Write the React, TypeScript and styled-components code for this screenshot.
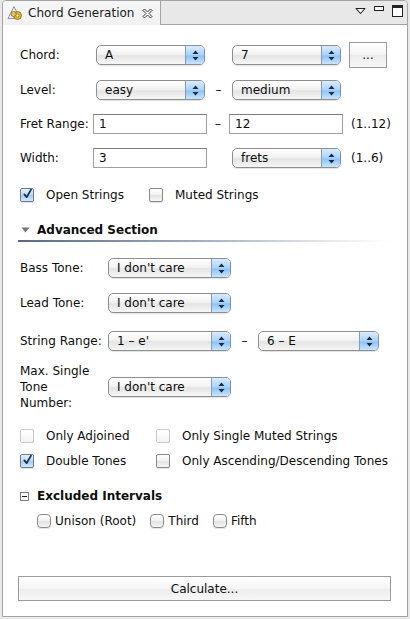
import React from 'react';
import styled, { createGlobalStyle } from 'styled-components';

const GlobalStyle = createGlobalStyle`
  html, body {
    margin: 0;
    padding: 0;
    background: #e9e9e9;
  }
  body {
    font-family: 'DejaVu Sans', 'Liberation Sans', sans-serif;
    font-size: 12px;
    color: #0d0d0d;
  }
`;

const View = styled.div`
  width: 406px;
  height: 617px;
  margin-left: 2px;
  box-sizing: border-box;
  border: 1px solid #a3a3a3;
  border-top-left-radius: 4px;
  border-top-right-radius: 4px;
  background: #fff;
  display: flex;
  flex-direction: column;
  overflow: hidden;
`;

const TabBar = styled.div`
  height: 23px;
  flex: none;
  display: flex;
  align-items: stretch;
  background: #e8e8e8;
  border-bottom: 1px solid #a3a3a3;
`;

const Tab = styled.div`
  flex: none;
  width: 158px;
  margin-bottom: -1px;
  box-sizing: border-box;
  display: flex;
  align-items: center;
  padding-left: 4px;
  background: linear-gradient(#f7f7f7, #f1f1f1);
  border-right: 1px solid #a3a3a3;
  border-top-left-radius: 4px;
  font-size: 12px;
  color: #1a1a1a;
  white-space: nowrap;
`;

const TabTitle = styled.span`
  margin: 0 8px 0 3px;
`;

const TabTools = styled.div`
  margin-left: auto;
  display: flex;
  align-items: flex-start;
  gap: 8px;
  padding: 4px 4px 0 0;
`;

const Content = styled.div`
  flex: 1;
  display: flex;
  flex-direction: column;
  padding-left: 17px;
`;

const Row = styled.div<{ $mt: number; $h?: number }>`
  display: flex;
  align-items: center;
  margin-top: ${(p) => p.$mt}px;
  height: ${(p) => p.$h ?? 20}px;
`;

const Label = styled.div<{ $w: number }>`
  width: ${(p) => p.$w}px;
  flex: none;
  line-height: 16px;
`;

const Dash = styled.div<{ $w: number }>`
  width: ${(p) => p.$w}px;
  flex: none;
  text-align: center;
`;

const Hint = styled.div<{ $ml: number }>`
  margin-left: ${(p) => p.$ml}px;
`;

const SelectBox = styled.div<{ $w: number }>`
  width: ${(p) => p.$w}px;
  height: 20px;
  flex: none;
  box-sizing: border-box;
  border: 1px solid #8e8e8e;
  border-radius: 5px;
  background: linear-gradient(#ffffff, #f3f3f3 45%, #e4e4e4 55%, #f6f6f6);
  box-shadow: 0 1px 1px rgba(0, 0, 0, 0.12);
  display: flex;
  align-items: center;
  overflow: hidden;
`;

const SelectText = styled.span`
  flex: 1;
  padding-left: 8px;
  white-space: nowrap;
`;

const SelectArrows = styled.span`
  width: 19px;
  align-self: stretch;
  box-sizing: border-box;
  border-left: 1px solid #7f9cc4;
  background: linear-gradient(#d9ecff, #a9d2fb 50%, #8cc2f7 55%, #c8e6ff);
  display: flex;
  align-items: center;
  justify-content: center;
`;

const TextInput = styled.div<{ $w: number }>`
  width: ${(p) => p.$w}px;
  height: 20px;
  flex: none;
  box-sizing: border-box;
  border: 1px solid #a0a0a0;
  border-top-color: #7c7c7c;
  background: #fff;
  padding-left: 5px;
  display: flex;
  align-items: center;
`;

const PushButton = styled.div<{ $w: number; $h: number; $ml?: number }>`
  width: ${(p) => p.$w}px;
  height: ${(p) => p.$h}px;
  margin-left: ${(p) => p.$ml ?? 0}px;
  flex: none;
  box-sizing: border-box;
  border: 1px solid #9a9a9a;
  background: linear-gradient(#ffffff, #f4f4f4 50%, #ececec 51%, #f7f7f7);
  display: flex;
  align-items: center;
  justify-content: center;
`;

const CheckItem = styled.div<{ $w?: number; $gap: number }>`
  width: ${(p) => (p.$w ? `${p.$w}px` : 'auto')};
  flex: none;
  display: flex;
  align-items: center;
  gap: ${(p) => p.$gap}px;
`;

const Box = styled.span<{ $checked?: boolean; $disabled?: boolean; $round?: number }>`
  width: 14px;
  height: 14px;
  box-sizing: border-box;
  border-radius: ${(p) => p.$round ?? 2}px;
  border: 1px solid ${(p) => (p.$disabled ? '#c8c8c8' : p.$checked ? '#6a7c96' : '#8a8a8a')};
  background: ${(p) =>
    p.$checked
      ? 'linear-gradient(#e4f1fd, #b9d9f6 50%, #a2cdf3 55%, #d4ebff)'
      : p.$disabled
      ? 'linear-gradient(#ffffff, #f4f4f4)'
      : 'linear-gradient(#ffffff, #f0f0f0 50%, #e3e3e3 55%, #f6f6f6)'};
  box-shadow: ${(p) => (p.$disabled ? 'none' : '0 1px 1px rgba(0,0,0,0.12)')};
  display: flex;
  align-items: center;
  justify-content: center;
  overflow: visible;
`;

const CheckText = styled.span`
  white-space: nowrap;
`;

const SectionHeader = styled.div<{ $mt: number; $gap: number }>`
  display: flex;
  align-items: center;
  gap: ${(p) => p.$gap}px;
  height: 18px;
  margin-top: ${(p) => p.$mt}px;
  font-weight: bold;
  font-size: 12px;
`;

const SectionRule = styled.div`
  height: 2px;
  margin: 1px 17px 0 -2px;
  background: linear-gradient(90deg, #566a84, #9aa8b8 45%, #dfe3e8 80%, rgba(255, 255, 255, 0));
`;

const Intervals = styled.div`
  display: flex;
  align-items: center;
  gap: 14px;
  margin-top: 8px;
  margin-left: 17px;
  height: 16px;
`;

const CalcRow = styled.div`
  margin-top: 47px;
  margin-left: -2px;
  width: 373px;
`;

const Arrows = () => (
  <svg width="7" height="11" viewBox="0 0 7 11">
    <path d="M3.5 0.5 L6.5 4 L0.5 4 Z" fill="#1c2a3c" />
    <path d="M3.5 10.5 L6.5 7 L0.5 7 Z" fill="#1c2a3c" />
  </svg>
);

const Select = ({ w, value }: { w: number; value: string }) => (
  <SelectBox $w={w}>
    <SelectText>{value}</SelectText>
    <SelectArrows>
      <Arrows />
    </SelectArrows>
  </SelectBox>
);

const Check = ({ checked, disabled, round }: { checked?: boolean; disabled?: boolean; round?: number }) => (
  <Box $checked={checked} $disabled={disabled} $round={round}>
    {checked && (
      <svg width="14" height="14" viewBox="0 0 14 14" style={{ marginTop: -3, marginLeft: 1 }}>
        <path d="M3 7.5 L6 11 L11.5 1.5" fill="none" stroke="#1d2b3f" strokeWidth="2.2" strokeLinecap="round" strokeLinejoin="round" />
      </svg>
    )}
  </Box>
);

const ViewIcon = () => (
  <svg width="18" height="16" viewBox="0 0 18 16">
    <path d="M7 1.5 L13 13.5 L1 13.5 Z" fill="#eef2f8" stroke="#8a97ab" strokeWidth="1" />
    <circle cx="10.5" cy="10.5" r="4" fill="#e2b23a" stroke="#8c6a16" strokeWidth="0.8" />
    <circle cx="10.5" cy="10.5" r="1.5" fill="#fff3c8" stroke="#8c6a16" strokeWidth="0.6" />
    <circle cx="6.5" cy="9" r="2.6" fill="#e8c14f" stroke="#8c6a16" strokeWidth="0.7" />
  </svg>
);

const CloseIcon = () => (
  <svg width="11" height="11" viewBox="0 0 11 11">
    <path
      d="M1 2.5 L2.5 1 L5.5 4 L8.5 1 L10 2.5 L7 5.5 L10 8.5 L8.5 10 L5.5 7 L2.5 10 L1 8.5 L4 5.5 Z"
      fill="#fff"
      stroke="#333"
      strokeWidth="1"
      strokeLinejoin="round"
    />
  </svg>
);

const MenuIcon = () => (
  <svg width="11" height="8" viewBox="0 0 11 8" style={{ marginTop: 2 }}>
    <path d="M1 1.5 L10 1.5 L5.5 6.5 Z" fill="#fff" stroke="#222" strokeWidth="1.1" strokeLinejoin="round" />
  </svg>
);

const MinIcon = () => (
  <svg width="10" height="6" viewBox="0 0 10 6" style={{ marginTop: 1 }}>
    <rect x="0.5" y="0.5" width="9" height="4" fill="#fff" stroke="#222" strokeWidth="1" />
  </svg>
);

const MaxIcon = () => (
  <svg width="11" height="12" viewBox="0 0 11 12">
    <rect x="0.5" y="0.5" width="10" height="11" fill="#fff" stroke="#222" strokeWidth="1" />
    <rect x="0.5" y="0.5" width="10" height="2.5" fill="#222" />
  </svg>
);

const Triangle = () => (
  <svg width="9" height="6" viewBox="0 0 9 6" style={{ marginLeft: 1 }}>
    <path d="M0.5 0.5 L8.5 0.5 L4.5 5.5 Z" fill="#6f7680" />
  </svg>
);

const Collapse = () => (
  <svg width="9" height="9" viewBox="0 0 9 9">
    <rect x="0.5" y="0.5" width="8" height="8" fill="#fff" stroke="#7a7a7a" strokeWidth="1" />
    <path d="M2 4.5 L7 4.5" stroke="#222" strokeWidth="1" />
  </svg>
);

export default function App() {
  return (
    <>
      <GlobalStyle />
      <View>
        <TabBar>
          <Tab>
            <ViewIcon />
            <TabTitle>Chord Generation</TabTitle>
            <CloseIcon />
          </Tab>
          <TabTools>
            <MenuIcon />
            <MinIcon />
            <MaxIcon />
          </TabTools>
        </TabBar>
        <Content>
          <Row $mt={17} $h={26}>
            <Label $w={76}>Chord:</Label>
            <Select w={109} value="A" />
            <Dash $w={27} />
            <Select w={109} value="7" />
            <PushButton $w={38} $h={26} $ml={8}>...</PushButton>
          </Row>
          <Row $mt={12}>
            <Label $w={76}>Level:</Label>
            <Select w={109} value="easy" />
            <Dash $w={27}>–</Dash>
            <Select w={109} value="medium" />
          </Row>
          <Row $mt={14}>
            <Label $w={73}>Fret Range:</Label>
            <TextInput $w={114}>1</TextInput>
            <Dash $w={22}>–</Dash>
            <TextInput $w={114}>12</TextInput>
            <Hint $ml={8}>(1..12)</Hint>
          </Row>
          <Row $mt={14}>
            <Label $w={73}>Width:</Label>
            <TextInput $w={114}>3</TextInput>
            <Dash $w={25} />
            <Select w={109} value="frets" />
            <Hint $ml={10}>(1..6)</Hint>
          </Row>
          <Row $mt={19} $h={16}>
            <CheckItem $w={129} $gap={12}>
              <Check checked />
              <CheckText>Open Strings</CheckText>
            </CheckItem>
            <CheckItem $gap={12}>
              <Check />
              <CheckText>Muted Strings</CheckText>
            </CheckItem>
          </Row>
          <SectionHeader $mt={18} $gap={7}>
            <Triangle />
            <span>Advanced Section</span>
          </SectionHeader>
          <SectionRule />
          <Row $mt={16}>
            <Label $w={88}>Bass Tone:</Label>
            <Select w={123} value="I don't care" />
          </Row>
          <Row $mt={15}>
            <Label $w={88}>Lead Tone:</Label>
            <Select w={123} value="I don't care" />
          </Row>
          <Row $mt={18}>
            <Label $w={88}>String Range:</Label>
            <Select w={123} value="1 – e'" />
            <Dash $w={27}>–</Dash>
            <Select w={121} value="6 – E" />
          </Row>
          <Row $mt={12} $h={48}>
            <Label $w={88}>
              Max. Single
              <br />
              Tone
              <br />
              Number:
            </Label>
            <Select w={123} value="I don't care" />
          </Row>
          <Row $mt={17} $h={16}>
            <CheckItem $w={136} $gap={12}>
              <Check disabled />
              <CheckText>Only Adjoined</CheckText>
            </CheckItem>
            <CheckItem $gap={12}>
              <Check disabled />
              <CheckText>Only Single Muted Strings</CheckText>
            </CheckItem>
          </Row>
          <Row $mt={9} $h={16}>
            <CheckItem $w={136} $gap={12}>
              <Check checked />
              <CheckText>Double Tones</CheckText>
            </CheckItem>
            <CheckItem $gap={12}>
              <Check />
              <CheckText>Only Ascending/Descending Tones</CheckText>
            </CheckItem>
          </Row>
          <SectionHeader $mt={18} $gap={8}>
            <Collapse />
            <span>Excluded Intervals</span>
          </SectionHeader>
          <Intervals>
            <CheckItem $gap={4}>
              <Check round={4} />
              <CheckText>Unison (Root)</CheckText>
            </CheckItem>
            <CheckItem $gap={4}>
              <Check round={4} />
              <CheckText>Third</CheckText>
            </CheckItem>
            <CheckItem $gap={4}>
              <Check round={4} />
              <CheckText>Fifth</CheckText>
            </CheckItem>
          </Intervals>
          <CalcRow>
            <PushButton $w={373} $h={25}>Calculate...</PushButton>
          </CalcRow>
        </Content>
      </View>
    </>
  );
}
